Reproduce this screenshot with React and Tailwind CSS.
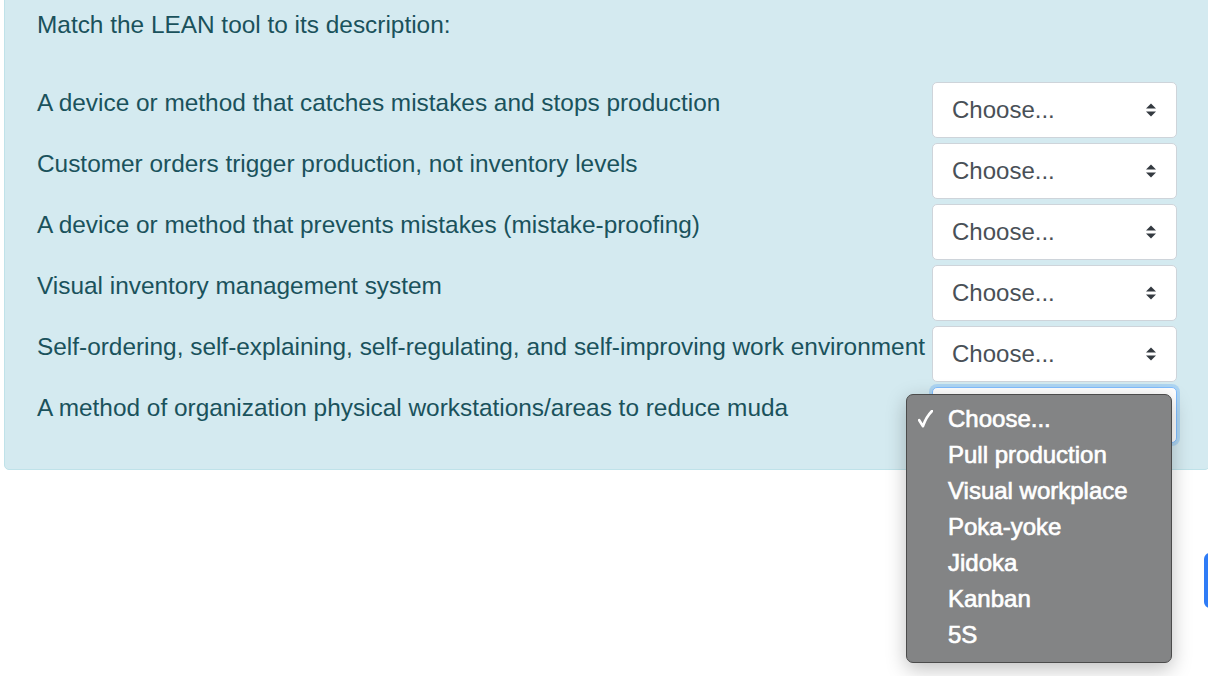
import { useState } from "react";

const questions = [
  "A device or method that catches mistakes and stops production",
  "Customer orders trigger production, not inventory levels",
  "A device or method that prevents mistakes (mistake-proofing)",
  "Visual inventory management system",
  "Self-ordering, self-explaining, self-regulating, and self-improving work environment",
  "A method of organization physical workstations/areas to reduce muda",
];

const options = ["Choose...", "Pull production", "Visual workplace", "Poka-yoke", "Jidoka", "Kanban", "5S"];

function Arrows() {
  return (
    <svg width="10" height="14" viewBox="0 0 10 14" className="shrink-0">
      <path d="M0 5.6 L5 0.4 L10 5.6 Z" fill="#343a40" />
      <path d="M0 8.4 L5 13.6 L10 8.4 Z" fill="#343a40" />
    </svg>
  );
}

function Check() {
  return (
    <svg width="15" height="18" viewBox="0 0 15 18">
      <path
        d="M1.2 10.2 L5 16.2 C7 10 10 5 14 1"
        fill="none"
        stroke="white"
        strokeWidth="2.6"
        strokeLinecap="round"
        strokeLinejoin="round"
      />
    </svg>
  );
}

function FakeSelect({ value, open, onToggle, onPick }) {
  return (
    <div className="relative w-[245px] shrink-0">
      <div
        onClick={onToggle}
        className={`h-[56px] flex items-center justify-between pl-[19px] pr-[20px] bg-white rounded-[5px] border text-[24px] text-[#495057] cursor-default ${
          open ? "border-[#80bdff] shadow-[0_0_0_3px_rgba(0,123,255,0.18)]" : "border-[#ced4da]"
        }`}
      >
        <span className={open ? "invisible" : ""}>{value}</span>
        <Arrows />
      </div>
      {open && (
        <div className="absolute left-[-26px] top-[7px] w-[266px] pt-[6px] pb-[9px] bg-[#838485] border border-[#4b4b4b] rounded-[7px] shadow-[0_6px_20px_rgba(0,0,0,0.25)] z-10">
          {options.map((o) => (
            <div
              key={o}
              onClick={() => onPick(o)}
              className="h-[36px] flex items-center text-white text-[24px] [-webkit-text-stroke:0.65px_white]"
            >
              <span className="w-[41px] pl-[11px] flex items-center">{o === value ? <Check /> : null}</span>
              <span>{o}</span>
            </div>
          ))}
        </div>
      )}
    </div>
  );
}

export default function App() {
  const [answers, setAnswers] = useState(questions.map(() => "Choose..."));
  const [openIdx, setOpenIdx] = useState(5);

  const pick = (i, v) => {
    const next = [...answers];
    next[i] = v;
    setAnswers(next);
    setOpenIdx(null);
  };

  return (
    <div
      className="w-[1208px] h-[676px] overflow-hidden bg-white"
      style={{ fontFamily: '"Liberation Sans", Arial, sans-serif' }}
    >
      <div className="ml-[4px] mt-[-13px] w-[1206px] bg-[#d4eaf0] border border-[#bfe2e9] rounded-[5px] pl-[32px] pr-[32px] pt-[19px] pb-[26px] text-[#1a525c]">
        <div className="text-[24.4px] leading-[36px] mb-[39px]">Match the LEAN tool to its description:</div>
        {questions.map((q, i) => (
          <div key={i} className={`flex items-start ${i < questions.length - 1 ? "mb-[5px]" : ""}`}>
            <div className="flex-1 pt-[3px] text-[24.4px] leading-[36px] whitespace-nowrap">{q}</div>
            <FakeSelect
              value={answers[i]}
              open={openIdx === i}
              onToggle={() => setOpenIdx(openIdx === i ? null : i)}
              onPick={(v) => pick(i, v)}
            />
          </div>
        ))}
      </div>
      <div className="flex justify-end mt-[83px]">
        <button aria-label="Check" className="h-[55px] w-[80px] mr-[-76px] bg-[#2f7cf6] rounded-[6px]" />
      </div>
    </div>
  );
}
